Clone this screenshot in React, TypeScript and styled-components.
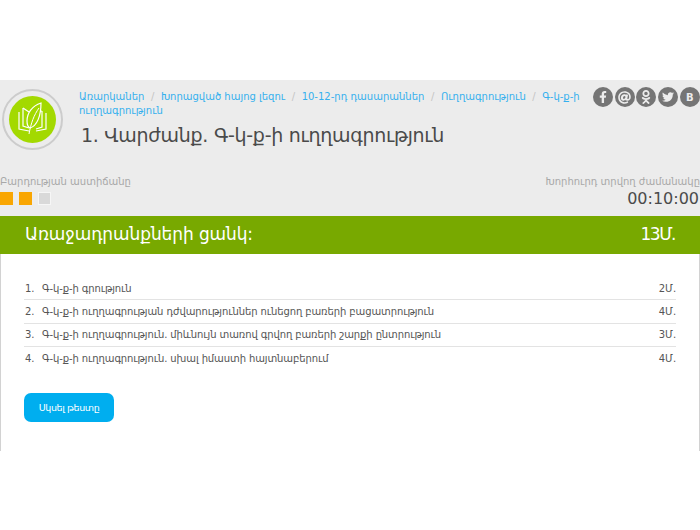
import React from 'react';
import styled, { createGlobalStyle } from 'styled-components';
import { FaFacebookF, FaOdnoklassniki, FaTwitter, FaAt } from 'react-icons/fa';

const GlobalStyle = createGlobalStyle`
  html, body {
    margin: 0;
    padding: 0;
    background: #ffffff;
  }
  body {
    font-family: "DejaVu Sans", sans-serif;
    color: #555555;
  }
`;

const Page = styled.div`
  width: 700px;
  height: 530px;
  padding-top: 80px;
  box-sizing: border-box;
  overflow: hidden;
`;

const Header = styled.header`
  height: 136px;
  background: #ececec;
  display: flex;
  flex-direction: column;
  box-sizing: border-box;
`;

const TopRow = styled.div`
  display: flex;
  height: 95px;
  padding: 9px 0 0 2px;
  box-sizing: border-box;
`;

const LogoRing = styled.div`
  width: 61px;
  height: 61px;
  flex: none;
  border: 2px solid #cccccc;
  border-radius: 50%;
  box-sizing: border-box;
  display: flex;
  align-items: center;
  justify-content: center;
`;

const LogoDisc = styled.div`
  width: 47px;
  height: 47px;
  border-radius: 50%;
  background: #a3d900;
  display: flex;
  align-items: center;
  justify-content: center;
`;

const TitleColumn = styled.div`
  width: 512px;
  margin-left: 16px;
  flex: none;
`;

const Breadcrumbs = styled.nav`
  margin-top: 1px;
  font-size: 10px;
  line-height: 14px;
  color: #35b0ee;
`;

const Separator = styled.span`
  color: #c4c4c4;
  margin: 0 6.6px;
`;

const Title = styled.h1`
  margin: 4px 0 0 2px;
  font-size: 19px;
  line-height: 26px;
  letter-spacing: -0.28px;
  font-weight: 400;
  color: #4a4a4a;
`;

const Socials = styled.div`
  display: flex;
  gap: 1.7px;
  margin: -2px 0 0 2px;
`;

const SocialIcon = styled.span`
  width: 20px;
  height: 20px;
  border-radius: 50%;
  background: #757575;
  color: #ececec;
  font-size: 10px;
  font-weight: 700;
  display: flex;
  align-items: center;
  justify-content: center;
`;

const MetaRow = styled.div`
  display: flex;
  justify-content: space-between;
`;

const MetaBlock = styled.div<{ $right?: boolean }>`
  display: flex;
  flex-direction: column;
  align-items: ${(p) => (p.$right ? 'flex-end' : 'flex-start')};
`;

const MetaLabel = styled.div`
  font-size: 10px;
  line-height: 14px;
  color: #a8a8a8;
`;

const Levels = styled.div`
  display: flex;
  gap: 6px;
  margin-top: 3px;
`;

const Level = styled.span<{ $on?: boolean }>`
  width: 13px;
  height: 13px;
  box-sizing: border-box;
  background: ${(p) => (p.$on ? '#f9a602' : '#d9d9d9')};
  border: 1px solid ${(p) => (p.$on ? '#f9a602' : '#f6f6f6')};
`;

const Timer = styled.div`
  font-size: 16px;
  line-height: 20px;
  margin-right: 1px;
  color: #4a4a4a;
`;

const Panel = styled.section`
  height: 235px;
  box-sizing: border-box;
  border-left: 1px solid #d2d2d2;
  border-right: 1px solid #d2d2d2;
  background: #ffffff;
`;

const PanelHead = styled.div`
  height: 38px;
  margin: 0 -1px;
  background: #78a900;
  color: #ffffff;
  display: flex;
  align-items: center;
  justify-content: space-between;
  padding: 0 25px 3px;
  box-sizing: border-box;
  font-size: 17px;
`;

const HeadTitle = styled.span`
  letter-spacing: -0.1px;
`;

const HeadPoints = styled.span`
  letter-spacing: -1.5px;
`;

const TaskList = styled.ol`
  list-style: none;
  margin: 23px 23px 0;
  padding: 0;
`;

const Task = styled.li`
  height: 23.4px;
  display: flex;
  align-items: center;
  font-size: 10px;
  letter-spacing: -0.1px;
  color: #555555;
  border-bottom: 1px solid #e3e3e3;
  box-sizing: border-box;
  &:last-child {
    border-bottom: none;
  }
`;

const TaskNumber = styled.span`
  width: 17px;
  margin-left: 1px;
  flex: none;
`;

const TaskName = styled.span`
  flex: 1;
`;

const StartButton = styled.button`
  display: block;
  margin: 22px 0 0 23px;
  width: 90px;
  height: 29px;
  border: none;
  border-radius: 7px;
  background: #00aeef;
  color: #ffffff;
  font-family: inherit;
  font-size: 9.5px;
  letter-spacing: -0.4px;
  padding: 0;
`;

const BookLogo = () => (
  <svg width="33" height="33" viewBox="0 0 33 33" fill="none" stroke="#ffffff" strokeWidth="1.2" style={{ overflow: 'visible' }}>
    <path d="M3 9v17l10 2M30 10v16l-10 2" />
    <path d="M7 5v18l6 2M26 8v16l-6 2" />
    <path d="M7 5l6 4M26 8l-5 1" />
    <path d="M25 0C16 3 11 10 11 18c0 3 1 6 3 7 7-2 11-12 11-25z" fill="#a3d900" />
    <path d="M23 5C18 12 15 20 13 31" strokeWidth="1" />
  </svg>
);

const crumbs = ['Առարկաներ', 'Խորացված հայոց լեզու', '10-12-րդ դասարաններ', 'Ուղղագրություն'];

const tasks = [
  { name: 'Գ-կ-ք-ի գրություն', points: '2Մ.' },
  { name: 'Գ-կ-ք-ի ուղղագրության դժվարություններ ունեցող բառերի բացատրություն', points: '4Մ.' },
  { name: 'Գ-կ-ք-ի ուղղագրություն. միևնույն տառով գրվող բառերի շարքի ընտրություն', points: '3Մ.' },
  { name: 'Գ-կ-ք-ի ուղղագրություն. սխալ իմաստի հայտնաբերում', points: '4Մ.' },
];

const App = () => {
  return (
    <Page>
      <GlobalStyle />
      <Header>
        <TopRow>
          <LogoRing>
            <LogoDisc>
              <BookLogo />
            </LogoDisc>
          </LogoRing>
          <TitleColumn>
            <Breadcrumbs>
              {crumbs.map((c) => (
                <React.Fragment key={c}>
                  {c}
                  <Separator>/</Separator>
                </React.Fragment>
              ))}
              Գ-կ-ք-ի
              <br />
              ուղղագրություն
            </Breadcrumbs>
            <Title>1. Վարժանք. Գ-կ-ք-ի ուղղագրություն</Title>
          </TitleColumn>
          <Socials>
            <SocialIcon><FaFacebookF size={12} /></SocialIcon>
            <SocialIcon><FaAt size={13} /></SocialIcon>
            <SocialIcon><FaOdnoklassniki size={14} /></SocialIcon>
            <SocialIcon><FaTwitter size={12} /></SocialIcon>
            <SocialIcon>B</SocialIcon>
          </Socials>
        </TopRow>
        <MetaRow>
          <MetaBlock>
            <MetaLabel>Բարդության աստիճանը</MetaLabel>
            <Levels>
              <Level $on />
              <Level $on />
              <Level />
            </Levels>
          </MetaBlock>
          <MetaBlock $right>
            <MetaLabel>Խորհուրդ տրվող ժամանակը</MetaLabel>
            <Timer>00:10:00</Timer>
          </MetaBlock>
        </MetaRow>
      </Header>
      <Panel>
        <PanelHead>
          <HeadTitle>Առաջադրանքների ցանկ:</HeadTitle>
          <HeadPoints>13Մ.</HeadPoints>
        </PanelHead>
        <TaskList>
          {tasks.map((t, i) => (
            <Task key={t.name}>
              <TaskNumber>{i + 1}.</TaskNumber>
              <TaskName>{t.name}</TaskName>
              <span>{t.points}</span>
            </Task>
          ))}
        </TaskList>
        <StartButton>Սկսել թեստը</StartButton>
      </Panel>
    </Page>
  );
};

export default App;
